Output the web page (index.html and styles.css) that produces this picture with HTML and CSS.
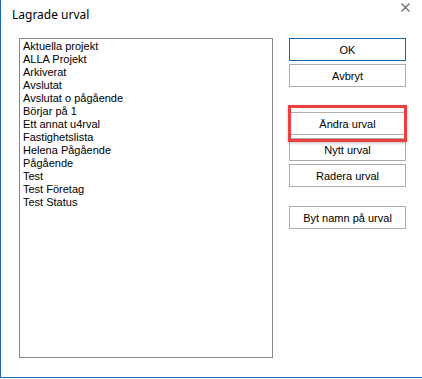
FILE: index.html
```html
<!DOCTYPE html>
<html lang="sv">
<head>
  <meta charset="UTF-8">
  <title>Lagrade urval</title>
  <link rel="stylesheet" href="styles.css">
</head>
<body>
  <div class="dialog">
    <div class="titlebar">
      <span class="title">Lagrade urval</span>
      <svg class="close" width="9" height="9" viewBox="0 0 9 9">
        <path d="M0.5 0.5 L8.5 8.5 M8.5 0.5 L0.5 8.5" stroke="#6a6a6a" stroke-width="1.2" fill="none"/>
      </svg>
    </div>
    <div class="content">
      <ul class="listbox">
        <li>Aktuella projekt</li>
        <li>ALLA Projekt</li>
        <li>Arkiverat</li>
        <li>Avslutat</li>
        <li>Avslutat o pågående</li>
        <li>Börjar på 1</li>
        <li>Ett annat u4rval</li>
        <li>Fastighetslista</li>
        <li>Helena Pågående</li>
        <li>Pågående</li>
        <li>Test</li>
        <li>Test Företag</li>
        <li>Test Status</li>
      </ul>
      <div class="buttons">
        <button class="btn default">OK</button>
        <button class="btn">Avbryt</button>
        <div class="highlight-wrap">
          <button class="btn spaced">Ändra urval</button>
          <div class="highlight"></div>
        </div>
        <button class="btn">Nytt urval</button>
        <button class="btn">Radera urval</button>
        <button class="btn spaced-small">Byt namn på urval</button>
      </div>
    </div>
  </div>
</body>
</html>
```

FILE: styles.css
```css
* {
  margin: 0;
  padding: 0;
  box-sizing: border-box;
}

body {
  width: 422px;
  height: 379px;
  background: #fff;
  overflow: hidden;
  font-family: "Noto Sans", "Open Sans", sans-serif;
}

.dialog {
  width: 422px;
  height: 378px;
  border-left: 1px solid #1e6bb4;
  border-bottom: 1px solid #1e6bb4;
  background: #fff;
}

.titlebar {
  height: 38px;
  padding-left: 11px;
  position: relative;
}

.title {
  display: block;
  padding-top: 6px;
  font-size: 12px;
  line-height: 18px;
  color: #000;
}

.close {
  position: absolute;
  top: 3px;
  right: 12px;
}

.content {
  display: flex;
  padding-left: 18px;
  gap: 16px;
}

.listbox {
  list-style: none;
  width: 254px;
  height: 320px;
  border: 1px solid #828790;
  padding: 1px 0 0 3px;
  font-family: "Liberation Sans", Arial, sans-serif;
  font-size: 11px;
  line-height: 13px;
  color: #000;
}

.buttons {
  display: flex;
  flex-direction: column;
  width: 117px;
}

.btn {
  display: block;
  width: 117px;
  height: 23px;
  margin-bottom: 3px;
  border: 1px solid #adadad;
  background: #fff;
  font-family: "Liberation Sans", Arial, sans-serif;
  font-size: 11px;
  color: #000;
}

.btn.default {
  border-color: #1766b0;
}

.spaced {
  margin-top: 22px;
}

.spaced-small {
  margin-top: 16px;
}

.highlight-wrap {
  position: relative;
}

.highlight {
  position: absolute;
  left: -1px;
  top: 15px;
  width: 119px;
  height: 37px;
  border: 3px solid #ec3f3f;
  box-shadow: 0 1px 3px rgba(0, 0, 0, 0.25);
}
```
